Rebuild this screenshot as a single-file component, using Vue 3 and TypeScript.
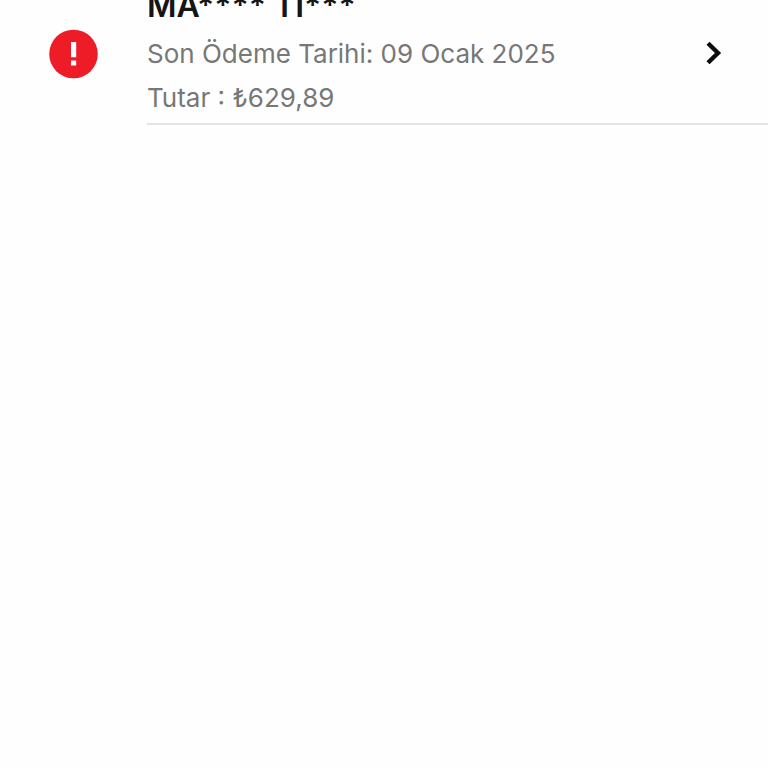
<script setup lang="ts">
interface Bill {
  name: string
  dueDate: string
  amount: string
}

const bills: Bill[] = [
  { name: 'MA**** Tİ***', dueDate: '09 Ocak 2025', amount: '₺629,89' },
]
</script>

<template>
  <main class="page">
    <ul class="bills">
      <li v-for="bill in bills" :key="bill.name">
        <a class="bill" href="#">
          <svg class="alert" viewBox="0 0 50 50" aria-hidden="true">
            <circle cx="25.5" cy="25" r="24.3" fill="#ee1c27" />
            <path d="M23 13h5.2v15.2H23zM23 31.6h5.2v5H23z" fill="#fff" />
          </svg>
          <span class="body">
            <span class="text">
              <strong class="name">{{ bill.name }}</strong>
              <span class="line">Son Ödeme Tarihi: {{ bill.dueDate }}</span>
              <span class="line">Tutar : {{ bill.amount }}</span>
            </span>
            <svg class="chevron" viewBox="0 0 18 26" aria-hidden="true">
              <path d="M3 3.2l10 9.8-10 9.8" fill="none" stroke="#0c0c0c" stroke-width="4.4" />
            </svg>
          </span>
        </a>
      </li>
    </ul>
  </main>
</template>

<style>
body {
  background: #fefefe;
}
</style>

<style scoped>
.page {
  min-height: 100vh;
  overflow: hidden;
  font-family: Inter, "Open Sans", sans-serif;
}
.bills {
  list-style: none;
  margin: -20px 0 0;
  padding: 0;
}
.bill {
  display: flex;
  align-items: center;
  padding-left: 48px;
  text-decoration: none;
}
.alert {
  width: 50px;
  height: 50px;
  margin-top: 2px;
  flex: none;
}
.body {
  flex: 1;
  display: flex;
  align-items: center;
  justify-content: space-between;
  margin-left: 49px;
  padding-right: 45px;
  border-bottom: 2px solid #e4e4e4;
}
.text {
  display: flex;
  flex-direction: column;
  padding-bottom: 3px;
}
.name {
  font-size: 32px;
  font-weight: 600;
  line-height: 52px;
  color: #151515;
}
.line {
  font-size: 26px;
  line-height: 44px;
  color: #777;
}
.chevron {
  width: 18px;
  height: 26px;
  margin-top: 2px;
  flex: none;
}
</style>
